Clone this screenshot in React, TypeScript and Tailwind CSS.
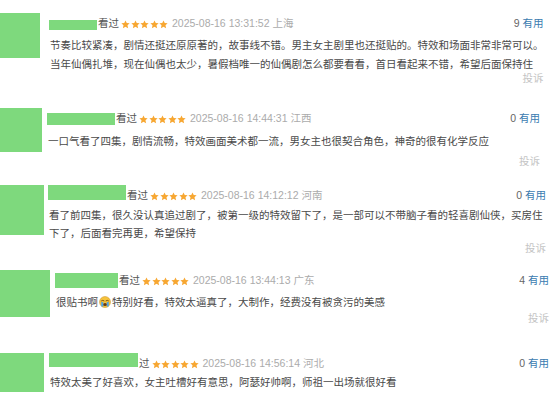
import React from "react";

type Review = {
  block: string;
  avatar: string;
  content: string;
  nameBar: string;
  watched: string;
  date: string;
  loc: string;
  votes: number;
  textMt: string;
  reportMt: string;
  lines: React.ReactNode[];
  report: boolean;
};

const Star = () => (
  <svg width="9" height="9" viewBox="0 0 24 24" className="shrink-0">
    <path
      d="M12 1l3.3 7.1 7.7.8-5.7 5.2 1.6 7.7L12 18l-6.9 3.8 1.6-7.7L1 8.9l7.7-.8z"
      fill="#f7a732"
    />
  </svg>
);

const CryFace = () => (
  <svg width="12" height="12" viewBox="0 0 24 24" className="inline-block align-[-2px] mx-[1px]">
    <circle cx="12" cy="12" r="11" fill="#f6c33c" stroke="#c9912a" strokeWidth="1" />
    <path d="M5 9.5q2.5-2 5 0M14 9.5q2.5-2 5 0" stroke="#5a3a12" strokeWidth="1.6" fill="none" strokeLinecap="round" />
    <ellipse cx="12" cy="17" rx="4" ry="3" fill="#6b3a12" />
    <path d="M4.5 11.5v9a3 3 0 0 0 4 0v-8z" fill="#4aa3e8" />
    <path d="M19.5 11.5v9a3 3 0 0 1-4 0v-8z" fill="#4aa3e8" />
  </svg>
);

const reviews: Review[] = [
  {
    block: "h-[95px]",
    avatar: "w-[40px] h-[45px]",
    content: "ml-[9px] pr-[14px]",
    nameBar: "w-[48px] h-[10px] mt-[7px]",
    watched: "看过",
    date: "2025-08-16 13:31:52",
    loc: "上海",
    votes: 9,
    textMt: "mt-0 leading-[19px]",
    reportMt: "mt-[-2px]",
    report: true,
    lines: [
      "节奏比较紧凑，剧情还挺还原原著的，故事线不错。男主女主剧里也还挺贴的。特效和场面非常非常可以。",
      "当年仙偶扎堆，现在仙偶也太少，暑假档唯一的仙偶剧怎么都要看看，首日看起来不错，希望后面保持住",
    ],
  },
  {
    block: "h-[77px]",
    avatar: "w-[42px] h-[44px]",
    content: "ml-[5px] pr-[14px]",
    nameBar: "w-[68px] h-[12px] mt-[5px]",
    watched: "看过",
    date: "2025-08-16 14:44:31",
    loc: "江西",
    votes: 0,
    textMt: "mt-[1px] leading-[19px]",
    reportMt: "mt-[4px]",
    report: true,
    lines: ["一口气看了四集，剧情流畅，特效画面美术都一流，男女主也很契合角色，神奇的很有化学反应"],
  },
  {
    block: "h-[85px]",
    avatar: "w-[44px] h-[50px]",
    content: "ml-[4px] pr-[8px]",
    nameBar: "w-[78px] h-[15px] mt-0",
    watched: "看过",
    date: "2025-08-16 14:12:12",
    loc: "河南",
    votes: 0,
    textMt: "mt-[-1px] leading-[18px]",
    reportMt: "mt-[-1px]",
    report: true,
    lines: [
      "看了前四集，很久没认真追过剧了，被第一级的特效留下了，是一部可以不带脑子看的轻喜剧仙侠，买房住",
      "下了，后面看完再更，希望保持",
    ],
  },
  {
    block: "h-[83px]",
    avatar: "w-[50px] h-[47px]",
    content: "ml-[5px] pr-[5px]",
    nameBar: "w-[63px] h-[15px] mt-[3px]",
    watched: "看过",
    date: "2025-08-16 13:44:13",
    loc: "广东",
    votes: 4,
    textMt: "mt-0 leading-[19px]",
    reportMt: "mt-0",
    report: true,
    lines: [
      <>
        很贴书啊
        <CryFace />
        特别好看，特效太逼真了，大制作，经费没有被贪污的美感
      </>,
    ],
  },
  {
    block: "h-[52px]",
    avatar: "w-[44px] h-[39px]",
    content: "ml-[5px] pr-[5px]",
    nameBar: "w-[89px] h-[14px] mt-0",
    watched: "过",
    date: "2025-08-16 14:56:14",
    loc: "河北",
    votes: 0,
    textMt: "mt-[-3px] leading-[19px]",
    reportMt: "mt-0",
    report: false,
    lines: ["特效太美了好喜欢，女主吐槽好有意思，阿瑟好帅啊，师祖一出场就很好看"],
  },
];

export default function App() {
  return (
    <div
      className="w-[554px] h-[405px] overflow-hidden bg-white pt-[13px] text-[10.5px] text-[#494949]"
      style={{ fontFamily: '"Liberation Sans", "Noto Sans CJK SC", sans-serif' }}
    >
      {reviews.map((r, i) => (
        <div key={i} className={`flex ${r.block}`}>
          <div className={`shrink-0 bg-[#7ed97d] ${r.avatar}`} />
          <div className={`flex-1 flex flex-col ${r.content}`}>
            <div className="flex items-center h-[22px]">
              <div className={`shrink-0 self-start bg-[#7ed97d] ${r.nameBar}`} />
              <span className="text-[#555] whitespace-nowrap mr-[2px] ml-[1px]">{r.watched}</span>
              <div className="flex gap-[0.5px]">
                {[0, 1, 2, 3, 4].map((s) => (
                  <Star key={s} />
                ))}
              </div>
              <span className="ml-[4px] text-[#ababab] whitespace-nowrap">{r.date}</span>
              <span className="ml-[3px] text-[#ababab] whitespace-nowrap">{r.loc}</span>
              <span className="ml-auto whitespace-nowrap">
                <span className="text-[#666]">{r.votes}</span>
                <span className="ml-[3px] text-[#3a7bb0]">有用</span>
              </span>
            </div>
            <div className={`pl-[1px] ${r.textMt}`} style={{ fontFamily: '"Noto Sans CJK SC", sans-serif' }}>
              {r.lines.map((l, j) => (
                <div key={j} className="whitespace-nowrap">
                  {l}
                </div>
              ))}
            </div>
            {r.report && (
              <div className={`text-right text-[#c4c4c4] leading-[14px] ${r.reportMt}`}>投诉</div>
            )}
          </div>
        </div>
      ))}
    </div>
  );
}
